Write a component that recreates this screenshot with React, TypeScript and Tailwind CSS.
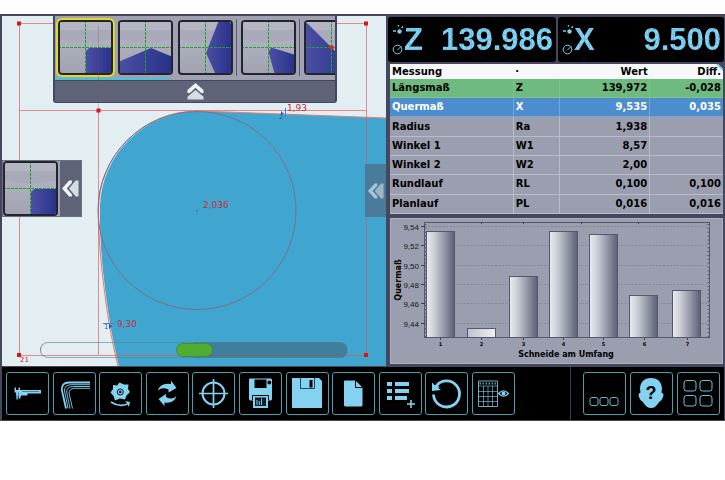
import type { ReactNode } from "react";

const SANS = "font-['DejaVu_Sans',Verdana,sans-serif]";

type Measurement = { name: string; code: string; value: string; diff: string; tone: string };

const NEUTRAL = "bg-[#9b9eae] text-black border-[#b9bcc9]";

const measurements: Measurement[] = [
  { name: "Längsmaß", code: "Z", value: "139,972", diff: "-0,028", tone: "bg-[#6fba7f] text-black border-[#7fc48d]" },
  { name: "Quermaß", code: "X", value: "9,535", diff: "0,035", tone: "bg-[#4d8dcd] text-white border-[#74a5d6]" },
  { name: "Radius", code: "Ra", value: "1,938", diff: "", tone: NEUTRAL },
  { name: "Winkel 1", code: "W1", value: "8,57", diff: "", tone: NEUTRAL },
  { name: "Winkel 2", code: "W2", value: "2,00", diff: "", tone: NEUTRAL },
  { name: "Rundlauf", code: "RL", value: "0,100", diff: "0,100", tone: NEUTRAL },
  { name: "Planlauf", code: "PL", value: "0,016", diff: "0,016", tone: NEUTRAL },
];

function Tile({ shape, label, selected = false, handle = false }: { shape: string; label: string; selected?: boolean; handle?: boolean }) {
  return (
    <button
      type="button"
      aria-label={label}
      className={`size-[55px] shrink-0 overflow-hidden rounded-[4px] border-2 border-[#23242f] bg-linear-to-b from-[#b7b8c4] to-[#a2a3b2] ${selected ? "outline-2 outline-[#dfdc20]" : ""}`}
    >
      <svg viewBox="2 2 51 51" className="block size-full">
        <path d="M0 0H55V19Q27 26 0 19Z" fill="#a9aab9" />
        <path d="M0 0H55V10H0Z" fill="#b4b5c2" />
        <path d={shape} fill="url(#facet)" />
        <path d="M27.5 0V55M0 27.5H55" stroke="#1fa32f" strokeWidth="1" strokeDasharray="3 1" />
        {handle && <path d="M25.5 25.5h4v4h-4z" fill="#d1281f" />}
      </svg>
    </button>
  );
}

const CORNER = "M28 31L31 28H55V55H28Z";

function Chevrons({ className }: { className: string }) {
  return (
    <svg viewBox="0 0 18 18" className={className}>
      <path d="M9 0L17.500 7.500V10.500H15L9 5L3 10.500H.5V7.500Z" fill="#eef3f5" />
      <path d="M9 7.500L17.500 14.500V17.500H.5V14.500Z" fill="#d2dee2" />
    </svg>
  );
}

function TileDivider() {
  return <div className="mt-[-1px] mr-[-1px] ml-[-2px] h-[57px] w-px shrink-0 bg-[#5d6075]" />;
}

function Viewer() {
  return (
    <section aria-label="Kamerabild" className="relative min-w-0 overflow-hidden bg-[#e2eef1]">
      <svg viewBox="2 16 384 350" className="block h-auto w-full" fontFamily="'DejaVu Sans', Verdana, sans-serif">
        <defs>
          <linearGradient id="facet">
            <stop offset="0" stopColor="#4c50a4" />
            <stop offset="1" stopColor="#263089" />
          </linearGradient>
        </defs>
        <path d="M386 118L228 112L197 111.500A98 98 0 0 0 100 205C99.500 240 101.500 263 105 291C108.500 320 113 346 118 366H386Z" fill="#41a6cf" />
        <path d="M98.500 215C98.500 240 101 263 104.500 291C108 320 113 346 118 366" fill="none" stroke="#f6dcd7" strokeWidth="1.800" />
        <path d="M386 118L228 112L197 111A99 99 0 0 0 98.500 210C98.500 240 101 263 104.500 291C108 320 113 346 118 366" fill="none" stroke="#e07f76" strokeWidth="1" />
        <circle cx="197" cy="210.500" r="99" fill="none" stroke="#7a6f8c" strokeWidth="1" />
        <path d="M19.500 23.500H366.500V355.500H19.500Z M19.500 110.500H366.500 M98.500 110.500V355" fill="none" stroke="#dc5858" strokeOpacity=".65" strokeWidth="1" />
        <path d="M17 21.500h4v4h-4zM364 21.500h4v4h-4zM96.500 108.500h4v4h-4zM17 353h4v4h-4zM364 353h4v4h-4z" fill="#dc1414" />
        <path d="M196 210h1.500v1.500h-1.500z" fill="#8b4a66" />
        <g fill="#cb2937" fontSize="9">
          <text x="287" y="111">1,93</text>
          <text x="203" y="208">2,036</text>
          <text x="117" y="327">9,30</text>
          <text x="20" y="362" fontSize="7">21</text>
        </g>
        <g fill="#2b56b0" fontSize="7">
          <text x="279" y="119">2</text>
          <text x="104" y="329">1</text>
        </g>
        <path d="M285.500 108V118M103 323.500H115" stroke="#4a7fc0" strokeWidth="1" />
        <path d="M281 111l3 3h-3zM109 324v5l3-3z" fill="#2b56b0" />
      </svg>

      <div className="absolute top-0 left-[51px] w-[284px] rounded-b-[3px] border-x-2 border-b border-[#45475e] bg-[#5f6378]">
        <div className="flex h-[62px] gap-[5px] overflow-hidden bg-[#a0a2b1] pt-[4px] pl-[3px]">
          <Tile label="Ecke" shape={CORNER} selected />
          <Tile label="Dach" shape="M0 42L33 28L55 37V55H0Z" />
          <Tile label="Spitze" shape="M41 0L28 33L38 55H55V0Z" />
          <TileDivider />
          <Tile label="Winkel" shape="M27.500 32L30 27.500L55 35V55H34Z" />
          <TileDivider />
          <Tile label="Schräge" shape="M0 0L28 28L55 55H0Z" handle />
        </div>
        <div className="h-[2px] bg-[#a0a2b1]">
          <div className="h-full w-[114px] bg-[#43c3dc]" />
        </div>
        <button type="button" aria-label="Leiste einklappen" className="flex h-[22px] w-full items-center justify-center border-t border-[#45475e]">
          <Chevrons className="size-[17px]" />
        </button>
      </div>
      <div className="pointer-events-none absolute top-[10px] left-[96px] h-[85px] w-px bg-[#7b4c68]/30" />

      <div className="absolute top-[144px] left-0 flex items-stretch border border-[#6d7083] bg-[#a0a2b1]">
        <Tile label="Aktuelle Form" shape={CORNER} />
        <button type="button" aria-label="Form ausblenden" className="ml-[2px] flex w-[21px] items-center justify-center bg-[#5f6378]">
          <Chevrons className="size-[17px] -rotate-90" />
        </button>
      </div>
      <button type="button" aria-label="Seitenleiste öffnen" className="absolute top-[148px] right-0 flex h-[53px] w-[21px] items-center justify-center bg-[#4a7b9b]">
        <Chevrons className="size-[16px] -rotate-90 opacity-60" />
      </button>

      <input
        type="range"
        aria-label="Position"
        defaultValue={50}
        className="absolute bottom-[8px] left-[38px] h-[16px] w-[308px] appearance-none rounded-full border border-[#5c7f8c]/60 bg-linear-to-r from-transparent from-50% to-[#3f6580]/60 to-50% [&::-webkit-slider-thumb]:h-[14px] [&::-webkit-slider-thumb]:w-[37px] [&::-webkit-slider-thumb]:appearance-none [&::-webkit-slider-thumb]:rounded-full [&::-webkit-slider-thumb]:border [&::-webkit-slider-thumb]:border-[#3f8a50] [&::-webkit-slider-thumb]:bg-[#4fae32]"
      />
    </section>
  );
}

function Readout({ axis, value }: { axis: string; value: string }) {
  const led =
    "bg-[repeating-linear-gradient(0deg,#68bfe5_0_1px,transparent_1px_5px),repeating-linear-gradient(90deg,#68bfe5_0_1px,#83d3f5_1px_5px)] bg-clip-text text-transparent";
  return (
    <div className="flex h-[45px] min-w-0 items-center rounded-[3px] bg-black pr-[3px] pl-[4px] font-['Liberation_Sans_Narrow','Liberation_Sans',Arial,sans-serif] text-[31px] leading-[40px] font-bold">
      <svg viewBox="0 0 12 30" className="h-[30px] w-[12px]" fill="none" stroke="#7fd0ee">
        <path d="M1 6h3M6.500 0v1.500M9.500 3l1.500-1.500" strokeWidth="1.400" />
        <circle cx="7.500" cy="6.500" r="1.800" fill="#7fd0ee" />
        <circle cx="5.500" cy="24.500" r="4.300" />
        <path d="M5.500 25l4-4" />
      </svg>
      <span className={led}>{axis}</span>
      <span className={`ml-auto ${led}`}>{value}</span>
    </div>
  );
}

function MeasurementTable() {
  return (
    <div className="relative">
      <table className="h-[150px] w-full table-fixed border-collapse text-[10px] leading-[14px] font-bold">
        <colgroup>
          <col className="w-[37%]" />
          <col className="w-[14%]" />
          <col className="w-[27%]" />
          <col className="w-[22%]" />
        </colgroup>
        <thead>
          <tr className="h-[15px] bg-[#f7f8f9]">
            <th className="px-[2px] pt-px pb-0 text-left">Messung</th>
            <th className="px-[2px] pt-px pb-0 text-left">·</th>
            <th className="px-[2px] pt-px pb-0 text-right">Wert</th>
            <th className="px-[2px] pt-px pb-0 text-right">Diff.</th>
          </tr>
        </thead>
        <tbody>
          {measurements.map((m) => (
            <tr key={m.code} className={`border-b ${m.tone}`}>
              <td className="border-r border-inherit px-[2px] py-0">{m.name}</td>
              <td className="border-r border-inherit px-[2px] py-0">{m.code}</td>
              <td className="border-r border-inherit px-[2px] py-0 text-right">{m.value}</td>
              <td className="px-[2px] py-0 text-right">{m.diff}</td>
            </tr>
          ))}
        </tbody>
      </table>
      <div className="absolute top-0 right-0 size-[7px] bg-linear-to-bl from-[#474961] from-30% to-[#69c0e0] to-30% [clip-path:polygon(0_0,100%_0,100%_100%)]" />
    </div>
  );
}

const bars = [
  { x: 426, top: 231, mid: 440 },
  { x: 467, top: 328, mid: 481 },
  { x: 509, top: 276, mid: 523 },
  { x: 549, top: 231, mid: 563 },
  { x: 589, top: 234, mid: 603 },
  { x: 629, top: 295, mid: 644 },
  { x: 672, top: 290, mid: 687 },
];
const grid = [
  { label: "9,54", y: 226.5 },
  { label: "9,52", y: 245.5 },
  { label: "9,50", y: 265.5 },
  { label: "9,48", y: 284.5 },
  { label: "9,46", y: 303.5 },
  { label: "9,44", y: 323.5 },
];

function Chart() {
  return (
    <svg viewBox="390 218 333 146" role="img" aria-label="Quermaß je Schneide" className="block h-auto w-full bg-[#9b9eae]">
      <defs>
        <linearGradient id="bar">
          <stop offset="0" stopColor="#e9ebee" />
          <stop offset=".25" stopColor="#cfd2d9" />
          <stop offset="1" stopColor="#5b5f77" />
        </linearGradient>
        <linearGradient id="lowBar">
          <stop offset="0" stopColor="#bfc2cc" />
          <stop offset="1" stopColor="#eef0f2" />
        </linearGradient>
      </defs>
      <path d="M390.500 218.500H722.500V363.500H390.500Z" fill="none" stroke="#adb0bd" />
      <rect x="424.500" y="222.500" width="285" height="115" fill="none" stroke="#55586c" />
      <path d="M425.500 224V337M708.500 224V337" stroke="#55586c" strokeWidth="2" strokeDasharray="1 2.860" />
      {grid.map((g) => (
        <g key={g.label}>
          <path d={`M425 ${g.y}H710`} stroke="#858899" strokeDasharray="2 1.500" />
          <path d={`M421 ${g.y}H425`} stroke="#3c3e50" />
          <text x="419" y={g.y + 3} textAnchor="end" fontSize="8" fill="#15161d" fontFamily="'Liberation Sans', Arial, sans-serif">
            {g.label}
          </text>
        </g>
      ))}
      <path d="M481.500 222v2M523.500 222v2M581.500 222v2M638.500 222v2" stroke="#3c3e50" />
      {bars.map((b, i) => (
        <g key={b.x}>
          <rect x={b.x + 0.5} y={b.top + 0.5} width="28" height={337 - b.top} fill={i === 1 ? "url(#lowBar)" : "url(#bar)"} stroke="#55586c" />
          <path d={`M${b.mid + 0.5} 338v2`} stroke="#3c3e50" />
          <text x={b.mid + 0.5} y="346" textAnchor="middle" fontSize="5" fontWeight="700" fontFamily="'DejaVu Sans', sans-serif">
            {i + 1}
          </text>
        </g>
      ))}
      <g fontFamily="'DejaVu Sans', Verdana, sans-serif" fontSize="8" fontWeight="700" textAnchor="middle">
        <text x="566" y="357">Schneide am Umfang</text>
        <text transform="translate(401 280) rotate(-90)">Quermaß</text>
      </g>
    </svg>
  );
}

function ToolButton({ label, children }: { label: string; children: ReactNode }) {
  return (
    <button type="button" aria-label={label} className="size-[43px] rounded-[3px] border border-[#489fae] bg-black">
      <svg viewBox="1 1 41 41" className="block size-full text-[#82d2f0]" fill="currentColor">
        {children}
      </svg>
    </button>
  );
}

function Toolbar() {
  const line = { fill: "none", stroke: "currentColor" };
  return (
    <nav aria-label="Werkzeuge" className="flex h-[53px] justify-between bg-black pr-[4px] pl-[4px]">
      <div className="flex w-[509px] items-center justify-between">
        <ToolButton label="Messschieber">
          <path d="M8.500 15.500h1.500v2.500h2.500v-2.500h1.500v2.500H35v3.500H21.500v2H15l-.8 3h-1.500v-3h-.9v4h-1.300L10 20.500H8.500Z" />
          <path d="M12.500 20.500V23M16 19.500h17" stroke="#20576a" strokeWidth=".6" />
        </ToolButton>
        <ToolButton label="Kontur">
          <path d="M37 10.500H16Q8.500 10.500 8.800 18L13 36.500" {...line} strokeWidth="1.800" />
          <path d="M37 12.700H18Q11 13 11.500 19L15 36.500M37 14.500H19.500Q13.500 15 13.700 20L17 36.500M37 16.300H21Q16 17 16 21L19.500 36.500" {...line} strokeWidth=".9" />
        </ToolButton>
        <ToolButton label="Werkzeug drehen">
          <path d="M14 13L18 13.500L20.500 10.500L25 12.500L29.500 12.500L29 17L31 20L27.500 23.500L26 27.500L21 26.500L16 28.500L14.500 24L11.500 20.500L14 17Z" />
          <circle cx="21.300" cy="20" r="3" fill="none" stroke="#000" strokeWidth=".9" />
          <circle cx="21.300" cy="20" r="1.200" fill="#000" />
          <path d="M12 30Q20 35.500 28.500 32" {...line} strokeWidth="1.600" />
          <path d="M26.500 29l4.500 1-1 5Z" />
        </ToolButton>
        <ToolButton label="Aktualisieren">
          <path d="M12 18.500Q14 10.500 25 12V8.500L30.500 16L22.500 20.500V17.500Q16 14.500 12 18.500Z" />
          <path d="M30.500 24Q28 32 18.500 30.500V34L12.500 27L20 22V25Q26 28.500 30.500 24Z" />
        </ToolButton>
        <ToolButton label="Zentrieren">
          <circle cx="21.500" cy="21.500" r="11" {...line} strokeWidth="2" />
          <path d="M7 21.500H36M21.500 7V36" {...line} strokeWidth="1.700" />
        </ToolButton>
        <ToolButton label="Speichern und drucken">
          <path d="M10.500 6.500H32Q33 6.500 33 8V27Q33 28.500 31 28.500H29V36H14V28.500H12Q10 28.500 10 27V8Q10 6.500 10.500 6.500Z" />
          <path d="M15.500 7.500H27.500V16H15.500Z" fill="#000" />
          <circle cx="30.300" cy="10.500" r="1.900" fill="#000" />
          <path d="M13.500 28V23.500H29.500V28" fill="none" stroke="#000" strokeWidth="1" />
          <path d="M16 25.500H27V34H16Z" fill="#0c1c22" />
          <path d="M18 28V33M20.300 29V33M22.600 26.500V33" {...line} strokeWidth="1" />
        </ToolButton>
        <ToolButton label="Speichern">
          <path d="M6 6H33L36 9V36H6Z" />
          <path d="M14.500 6V16.500H28.500V6" fill="none" stroke="#123a48" strokeWidth=".9" />
          <path d="M23.500 8H26.500V15.500H23.500Z" fill="#000" />
        </ToolButton>
        <ToolButton label="Neues Dokument">
          <path d="M13 8.500H23.500L30.500 15.500V33Q30.500 34.500 29 34.500H13.500Q12 34.500 12 33V9.500Q12 8.500 13 8.500Z" />
          <path d="M23.500 8.500V15.500H30.500" fill="none" stroke="#000" />
        </ToolButton>
        <ToolButton label="Eintrag hinzufügen">
          <path d="M8 10h5v4H8zM16 10h14v4H16zM8 17h5v4H8zM16 17h14v4H16zM8 24h5v4H8zM16 24h12v4H16z" />
          <path d="M28 32H36M32 28V36" {...line} strokeWidth="1.600" />
        </ToolButton>
        <ToolButton label="Zurücksetzen">
          <path d="M10.500 15A13 13 0 1 1 8.500 22.500" {...line} strokeWidth="2.800" />
          <path d="M7 10.500V19L16 18L13.500 16L14 14L9.500 13Z" />
        </ToolButton>
        <ToolButton label="Raster anzeigen">
          <path d="M6.500 9H25.500V34.500H6.500Z" {...line} strokeWidth=".8" />
          <path d="M6 14H26M6 19.500H26M6 24.500H26M6 29.500H26M11.500 14V34.500M16 14V34.500M20.500 14V34.500" {...line} strokeWidth=".6" />
          <path d="M7.500 11.500H25" {...line} strokeWidth="2" strokeDasharray="1.500 1.500" strokeOpacity=".7" />
          <path d="M26.500 21.500Q31.500 16 36.500 21.500Q31.500 27 26.500 21.500Z" {...line} strokeWidth="1.200" />
          <circle cx="31.500" cy="21.500" r="2" />
        </ToolButton>
      </div>
      <div className="flex border-l border-[#3a3b4c] pl-[12px]">
        <div className="flex w-[137px] items-center justify-between">
          <ToolButton label="Weitere Funktionen">
            <g fill="none" stroke="#62b8ca">
              <rect x="7" y="25.500" width="8" height="8" rx="2" />
              <rect x="17" y="25.500" width="8" height="8" rx="2" />
              <rect x="27" y="25.500" width="8" height="8" rx="2" />
            </g>
          </ToolButton>
          <ToolButton label="Hilfe">
            <path d="M21 6C28 6 32 10.500 32 17L31.500 20.500Q34.500 22 33 25Q31.500 29 29.500 29.500Q28 32 25.500 34.500Q21 37.500 16.500 34.500Q14 32 12.500 29.500Q10.500 29 9 25Q7.500 22 10.500 20.500L10 17C10 10.500 14 6 21 6Z" />
            <text x="21" y="27" textAnchor="middle" fontSize="18" fontWeight="700" fill="#000" fontFamily="'Liberation Sans', Arial, sans-serif">?</text>
          </ToolButton>
          <ToolButton label="Übersicht">
            <g fill="none" stroke="#70c5da">
              <rect x="7" y="8.500" width="12" height="10.500" rx="2.500" />
              <rect x="23" y="8.500" width="12" height="10.500" rx="2.500" />
              <rect x="7" y="23.500" width="12" height="10.500" rx="2.500" />
              <rect x="23" y="23.500" width="12" height="10.500" rx="2.500" />
            </g>
          </ToolButton>
        </div>
      </div>
    </nav>
  );
}

export default function App() {
  return (
    <div className={`min-h-screen bg-white pt-[14px] text-black ${SANS}`}>
      <main className="border-t-2 border-r border-b border-l-2 border-[#45475e] bg-[#45475e]">
        <div className="grid grid-cols-[384fr_336fr] gap-[2px] pb-[1px]">
          <Viewer />
          <div className="min-w-0">
            <div className="grid grid-cols-[168fr_166fr] gap-[2px] pt-px">
              <Readout axis="Z" value="139.986" />
              <Readout axis="X" value="9.500" />
            </div>
            <div className="flex flex-col gap-[4px] pt-[2px] pr-[1px] pl-[2px]">
              <MeasurementTable />
              <Chart />
            </div>
          </div>
        </div>
        <Toolbar />
      </main>
    </div>
  );
}
